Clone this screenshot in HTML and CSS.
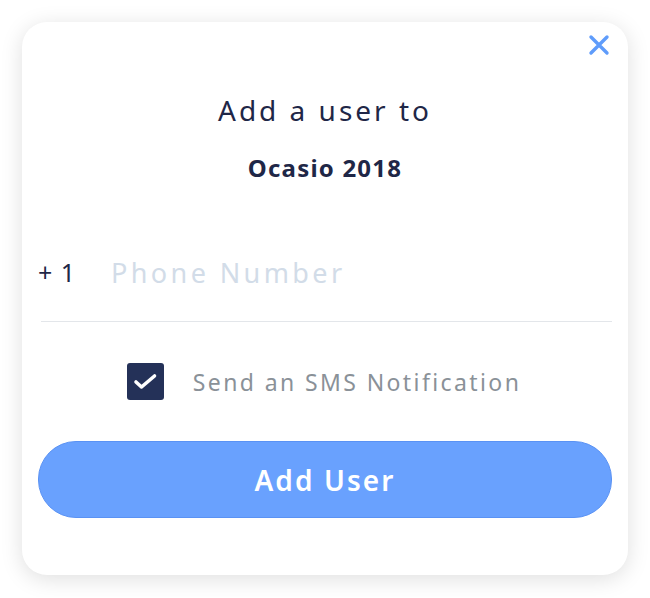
FILE: index.html
```html
<!DOCTYPE html>
<html lang="en">
<head>
    <meta charset="UTF-8">
    <meta name="viewport" content="width=device-width, initial-scale=1.0">
    <title>Add User</title>
    <link rel="stylesheet" href="styles.css">
</head>
<body>
    <div class="modal">
        <div class="modal-top">
            <button class="close" type="button" aria-label="Close">
                <svg width="22" height="22" viewBox="0 0 22 22">
                    <path d="M3 3 L19 19 M19 3 L3 19" stroke="#5f9cfb" stroke-width="3.4" stroke-linecap="round"/>
                </svg>
            </button>
        </div>
        <h1>Add a user to</h1>
        <h2>Ocasio 2018</h2>
        <form id="addUserForm">
            <div class="phone-row">
                <span class="prefix">+ 1</span>
                <input type="text" id="phone" name="phone" placeholder="Phone Number">
            </div>
            <div class="divider"></div>
            <label class="sms">
                <span class="checkbox">
                    <svg width="37" height="37" viewBox="0 0 37 37">
                        <path d="M9 19 L14.5 24 L27.5 13" fill="none" stroke="#fff" stroke-width="3.6" stroke-linecap="round" stroke-linejoin="round"/>
                    </svg>
                </span>
                <span class="sms-text">Send an SMS Notification</span>
            </label>
            <button type="submit" class="submit">Add User</button>
        </form>
    </div>
</body>
</html>
```

FILE: styles.css
```css
body {
    font-family: "Noto Sans", "Open Sans", sans-serif;
    margin: 0;
    padding: 22px;
    background-color: #fff;
}
.modal {
    width: 606px;
    height: 553px;
    box-sizing: border-box;
    background: white;
    border-radius: 25px;
    box-shadow: 0 4px 22px rgba(0,0,0,0.13);
    padding: 12px 16px 0 16px;
}
.modal-top {
    display: flex;
    justify-content: flex-end;
    height: 26px;
}
.close {
    background: none;
    border: none;
    padding: 0;
    margin-right: 2px;
    cursor: pointer;
    height: 22px;
}
h1 {
    margin: 32px 0 0;
    font-size: 28px;
    font-weight: 400;
    letter-spacing: 3px;
    line-height: 36px;
    color: #1f2747;
    text-align: center;
}
h2 {
    margin: 25px 0 0;
    font-size: 24px;
    font-weight: 700;
    letter-spacing: 1.2px;
    line-height: 30px;
    color: #1f2747;
    text-align: center;
}
.phone-row {
    display: flex;
    align-items: center;
    margin-top: 66px;
    height: 46px;
}
.prefix {
    font-size: 25px;
    color: #1f2747;
    width: 73px;
    letter-spacing: 1px;
}
.phone-row input {
    border: none;
    outline: none;
    font-family: inherit;
    font-size: 27px;
    letter-spacing: 3.4px;
    color: #1f2747;
    padding: 0;
    flex: 1;
}
.phone-row input::placeholder {
    color: #d2dce8;
}
.divider {
    margin: 26px 0 0 3px;
    border-top: 1.5px solid #e3e6ea;
}
.sms {
    display: flex;
    align-items: center;
    justify-content: center;
    gap: 29px;
    margin-top: 41px;
    margin-right: 2px;
}
.checkbox {
    width: 37px;
    height: 37px;
    border-radius: 3px;
    background-color: #243158;
    display: flex;
}
.sms-text {
    font-size: 23px;
    color: #8a9198;
    letter-spacing: 2.4px;
}
.submit {
    display: block;
    width: 100%;
    height: 77px;
    margin-top: 41px;
    background-color: #69a1fe;
    border: 1px solid #5a92f4;
    border-radius: 38px;
    color: white;
    font-family: inherit;
    font-size: 28px;
    font-weight: 600;
    letter-spacing: 2.1px;
    cursor: pointer;
}
```
